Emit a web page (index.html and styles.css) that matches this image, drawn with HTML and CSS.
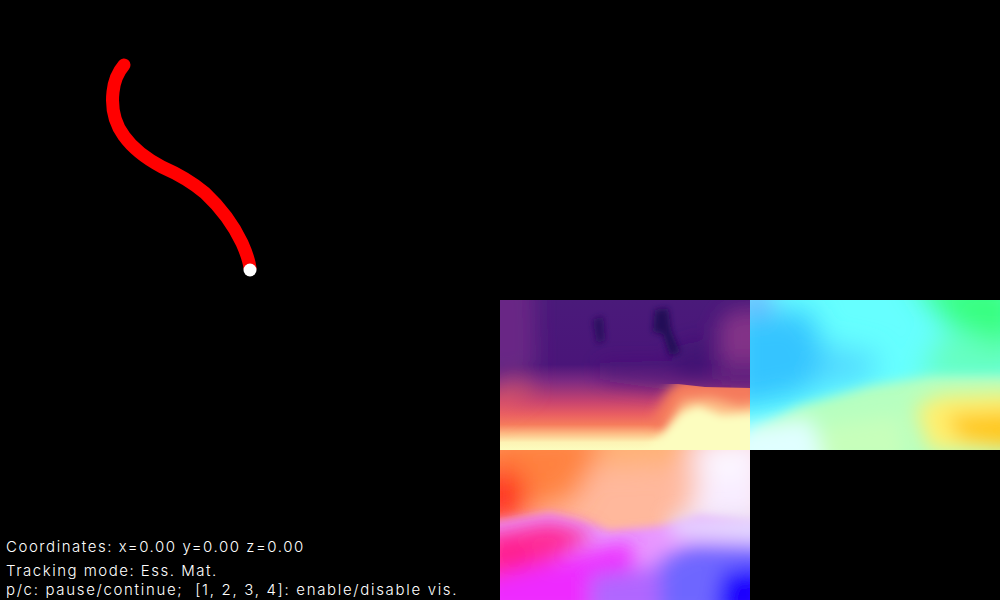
FILE: index.html
```html
<!DOCTYPE html>
<html lang="en">
<head>
<meta charset="utf-8">
<title>Visual odometry viewer</title>
<link rel="stylesheet" href="styles.css">
</head>
<body>
<main class="viewer">
  <section class="left">
    <div class="trajectory">
      <svg class="canvas" viewBox="0 0 500 300" width="500" height="300" aria-label="Trajectory">
        <path class="track" d="M124 65C118 72 114 82 113 92C111 110 115 124 124 136C134 150 147 159 162 167C178 174 192 182 205 193C221 208 234 226 242 243C246 252 249 260 250 268"/>
        <circle class="head" cx="250" cy="270" r="6.5"/>
      </svg>
    </div>
    <div class="status">
      <p class="line coords">Coordinates: x=0.00 y=0.00 z=0.00</p>
      <p class="line mode">Tracking mode: Ess. Mat.</p>
      <p class="line help">p/c: pause/continue;  [1, 2, 3, 4]: enable/disable vis.</p>
    </div>
  </section>
  <section class="maps">
    <svg class="map" viewBox="0 0 250 150" width="250" height="150" aria-label="Depth">
      <defs>
        <linearGradient id="depthBase" x1="0" y1="0" x2="0" y2="1">
          <stop offset="0" stop-color="#4a1a7a"/>
          <stop offset=".43" stop-color="#4a1579"/>
          <stop offset=".54" stop-color="#7d2a82"/>
          <stop offset=".68" stop-color="#c8446f"/>
          <stop offset=".76" stop-color="#e85d62"/>
          <stop offset=".83" stop-color="#f67c5c"/>
          <stop offset=".89" stop-color="#fdbb84"/>
          <stop offset=".95" stop-color="#fdf3b4"/>
          <stop offset="1" stop-color="#fcfdbf"/>
        </linearGradient>
        <filter id="b3" x="-20%" y="-20%" width="140%" height="140%"><feGaussianBlur stdDeviation="3"/></filter>
        <filter id="b4" x="-20%" y="-20%" width="140%" height="140%"><feGaussianBlur stdDeviation="4"/></filter>
        <filter id="b6" x="-20%" y="-20%" width="140%" height="140%"><feGaussianBlur stdDeviation="6"/></filter>
        <filter id="b10" x="-30%" y="-30%" width="160%" height="160%"><feGaussianBlur stdDeviation="10"/></filter>
        <filter id="b14" x="-40%" y="-40%" width="180%" height="180%"><feGaussianBlur stdDeviation="14"/></filter>
        <clipPath id="hump"><polygon points="100,150 100,84 178,84 205,87 250,88 250,150"/></clipPath>
      </defs>
      <rect width="250" height="150" fill="url(#depthBase)"/>
      <g filter="url(#b10)">
        <polygon points="-20,-20 34,-20 36,68 -20,76" fill="#692885"/>
        <polygon points="218,25 232,10 270,10 270,82 222,82" fill="#823087"/>
        <polygon points="100,62 270,60 270,92 170,90 100,80" fill="#4a1579" opacity=".55"/>
        <polygon points="-10,85 20,75 40,90 -10,125" fill="#f06a60" opacity=".4"/>
        <polygon points="172,48 208,38 210,78 175,72" fill="#3a1270" opacity=".6"/>
      </g>
      <g filter="url(#b3)">
        <polygon points="93,20 103,16 105,40 97,44" fill="#2a0f5e"/>
        <polygon points="155,10 168,8 171,30 180,52 170,56 163,34 153,32" fill="#220d56"/>
      </g>
      <g clip-path="url(#hump)">
        <g filter="url(#b6)">
          <polygon points="152,122 166,92 180,78 260,78 260,170 178,170 172,132" fill="#f57a5c"/>
        </g>
        <g filter="url(#b6)">
          <polygon points="168,128 182,100 210,98 240,106 270,100 270,170 170,170" fill="#fdbf88"/>
        </g>
        <g filter="url(#b4)">
          <polygon points="148,150 182,112 198,106 222,115 270,112 270,170 140,170" fill="#fcfdbf"/>
        </g>
      </g>
    </svg>
    <svg class="map" viewBox="0 0 250 150" width="250" height="150" aria-label="Optical flow forward">
      <rect width="250" height="150" fill="#66ffff"/>
      <g filter="url(#b14)">
        <polygon points="160,-20 270,-20 270,50 205,30" fill="#38ff80"/>
        <polygon points="190,35 270,45 270,80 170,80" fill="#66ffbe"/>
        <polygon points="60,40 130,55 120,80 50,95" fill="#52dcff"/>
        <polygon points="-20,15 60,10 75,60 50,95 -20,110" fill="#34c4ff"/>
        <ellipse cx="5" cy="0" rx="18" ry="12" fill="#7a9cff"/>
      </g>
      <g filter="url(#b6)">
        <polygon points="5,130 50,106 120,86 180,76 260,76 260,160 0,160" fill="#b6ffc0"/>
      </g>
      <g filter="url(#b10)">
        <polygon points="-20,128 60,118 80,170 -20,170" fill="#e0ffff"/>
        <polygon points="70,125 150,115 160,170 70,170" fill="#d2ffb8" opacity=".6"/>
        <polygon points="165,108 190,95 270,92 270,150 180,150" fill="#fff070"/>
        <polygon points="195,115 270,110 270,150 210,140" fill="#ffc81a"/>
      </g>
    </svg>
    <svg class="map" viewBox="0 0 250 150" width="250" height="150" aria-label="Optical flow backward">
      <rect width="250" height="150" fill="#ffb89c"/>
      <g filter="url(#b14)">
        <polygon points="-20,-20 110,-20 70,50 -20,70" fill="#ff8240"/>
        <polygon points="100,-20 220,-20 190,10 100,15" fill="#ffb070"/>
        <polygon points="-20,15 24,25 24,70 -20,75" fill="#ff2a1c"/>
        <polygon points="190,-10 270,-20 270,80 180,80 195,40" fill="#f8ecff"/>
        <ellipse cx="228" cy="15" rx="18" ry="12" fill="#ffffff"/>
      </g>
      <g filter="url(#b4)">
        <polygon points="-10,72 50,63 80,70 110,81 160,76 200,66 260,72 260,160 -10,160" fill="#e896ff"/>
      </g>
      <g filter="url(#b10)">
        <polygon points="-20,85 50,72 95,84 40,118 -20,130" fill="#ff2a96"/>
        <ellipse cx="14" cy="106" rx="12" ry="10" fill="#ff1088"/>
        <polygon points="-20,130 50,112 130,92 140,170 -20,170" fill="#ee2aff"/>
        <polygon points="90,125 170,115 170,170 90,170" fill="#b066ff"/>
        <polygon points="170,68 270,65 270,92 170,85" fill="#e4e0ff"/>
        <polygon points="160,112 190,96 270,96 270,170 160,170" fill="#6e66ff"/>
        <polygon points="222,122 270,115 270,170 215,170" fill="#1c00ff"/>
      </g>
    </svg>
    <div class="empty"></div>
  </section>
</main>
</body>
</html>
```
FILE: styles.css
```css
* { box-sizing: border-box; }
html, body { margin: 0; height: 100%; background: #000; overflow: hidden; }
.viewer { display: grid; grid-template-columns: 500px 500px; width: 1000px; height: 600px; background: #000; }
.left { display: flex; flex-direction: column; justify-content: space-between; height: 600px; }
.trajectory { height: 300px; }
.canvas, .map { display: block; }
.track { fill: none; stroke: #f00; stroke-width: 13; stroke-linecap: round; stroke-linejoin: round; }
.head { fill: #fff; }
.status { display: flex; flex-direction: column; padding: 0 0 0 6px; }
.line { margin: 0; color: #fff; font-family: Inter, sans-serif; font-weight: 300; font-size: 15px; line-height: 20px; white-space: pre; }
.coords { margin-bottom: 4px; letter-spacing: 1.55px; }
.mode { margin-bottom: -1px; letter-spacing: 1.5px; }
.help { letter-spacing: 1.68px; }
.maps { display: grid; grid-template-columns: 250px 250px; grid-template-rows: 150px 150px; align-self: end; }
.empty { background: #000; }
```
